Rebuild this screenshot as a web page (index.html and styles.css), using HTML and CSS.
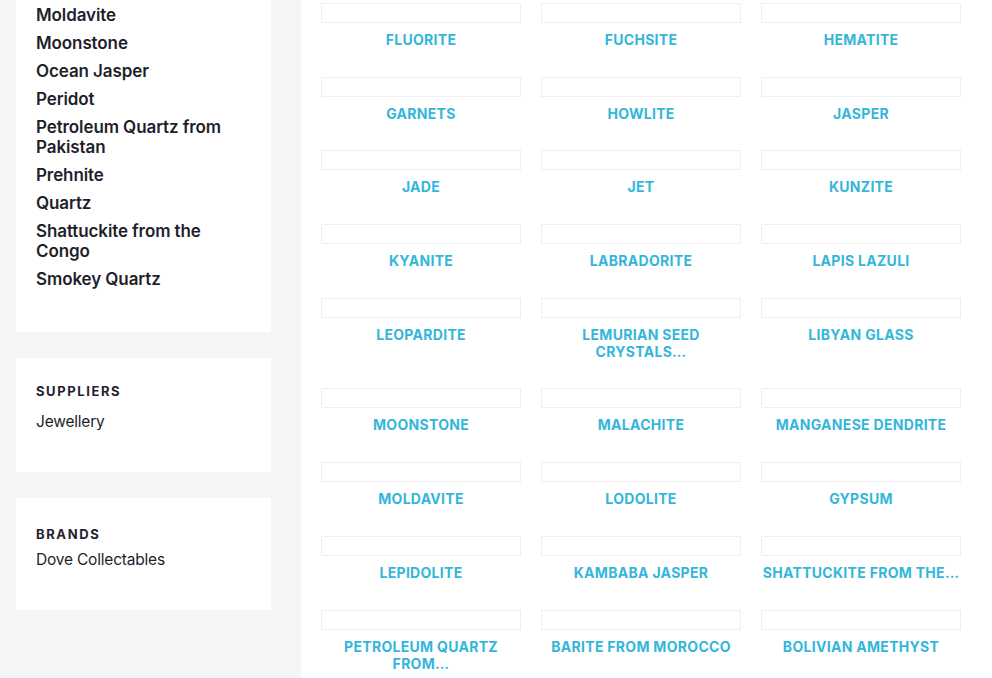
FILE: index.html
```html
<!DOCTYPE html>
<html lang="en">
<head>
<meta charset="utf-8">
<title>Crystals</title>
<link rel="stylesheet" href="styles.css">
</head>
<body>
<div class="page">
  <aside class="sidebar">
    <section class="widget widget-cats">
      <ul class="cat-list">
        <li>Moldavite</li>
        <li>Moonstone</li>
        <li>Ocean Jasper</li>
        <li>Peridot</li>
        <li>Petroleum Quartz from Pakistan</li>
        <li>Prehnite</li>
        <li>Quartz</li>
        <li>Shattuckite from the Congo</li>
        <li>Smokey Quartz</li>
      </ul>
    </section>
    <section class="widget widget-suppliers">
      <h3 class="widget-title">Suppliers</h3>
      <p class="widget-item">Jewellery</p>
    </section>
    <section class="widget widget-brands">
      <h3 class="widget-title">Brands</h3>
      <p class="widget-item">Dove Collectables</p>
    </section>
  </aside>
  <main class="main">
    <div class="grid">
      <a class="card"><span class="thumb"></span><span class="label">Fluorite</span></a>
      <a class="card"><span class="thumb"></span><span class="label">Fuchsite</span></a>
      <a class="card"><span class="thumb"></span><span class="label">Hematite</span></a>
      <a class="card"><span class="thumb"></span><span class="label">Garnets</span></a>
      <a class="card"><span class="thumb"></span><span class="label">Howlite</span></a>
      <a class="card"><span class="thumb"></span><span class="label">Jasper</span></a>
      <a class="card"><span class="thumb"></span><span class="label">Jade</span></a>
      <a class="card"><span class="thumb"></span><span class="label">Jet</span></a>
      <a class="card"><span class="thumb"></span><span class="label">Kunzite</span></a>
      <a class="card"><span class="thumb"></span><span class="label">Kyanite</span></a>
      <a class="card"><span class="thumb"></span><span class="label">Labradorite</span></a>
      <a class="card"><span class="thumb"></span><span class="label">Lapis Lazuli</span></a>
      <a class="card"><span class="thumb"></span><span class="label">Leopardite</span></a>
      <a class="card"><span class="thumb"></span><span class="label">Lemurian Seed Crystals…</span></a>
      <a class="card"><span class="thumb"></span><span class="label">Libyan Glass</span></a>
      <a class="card"><span class="thumb"></span><span class="label">Moonstone</span></a>
      <a class="card"><span class="thumb"></span><span class="label">Malachite</span></a>
      <a class="card"><span class="thumb"></span><span class="label">Manganese Dendrite</span></a>
      <a class="card"><span class="thumb"></span><span class="label">Moldavite</span></a>
      <a class="card"><span class="thumb"></span><span class="label">Lodolite</span></a>
      <a class="card"><span class="thumb"></span><span class="label">Gypsum</span></a>
      <a class="card"><span class="thumb"></span><span class="label">Lepidolite</span></a>
      <a class="card"><span class="thumb"></span><span class="label">Kambaba Jasper</span></a>
      <a class="card"><span class="thumb"></span><span class="label nowrap">Shattuckite from the…</span></a>
      <a class="card"><span class="thumb"></span><span class="label">Petroleum Quartz from…</span></a>
      <a class="card"><span class="thumb"></span><span class="label nowrap">Barite from Morocco</span></a>
      <a class="card"><span class="thumb"></span><span class="label">Bolivian Amethyst</span></a>
    </div>
  </main>
</div>
</body>
</html>
```
FILE: styles.css
```css
html, body {
  margin: 0;
  padding: 0;
}
body {
  background: #f5f5f5;
  font-family: Inter, "Open Sans", sans-serif;
  color: #1e1e2a;
  height: 678px;
  overflow: hidden;
}
.page {
  display: flex;
  align-items: stretch;
  min-height: 678px;
}
.sidebar {
  width: 255px;
  flex: 0 0 255px;
  padding: 0 30px 0 16px;
  display: flex;
  flex-direction: column;
  gap: 26px;
}
.widget {
  background: #fff;
  padding: 0 20px 40px;
}
.widget-cats {
  padding-top: 5px;
  padding-bottom: 43px;
}
.cat-list {
  list-style: none;
  margin: 0;
  padding: 0;
  display: flex;
  flex-direction: column;
  gap: 8px;
}
.cat-list li {
  font-size: 17px;
  line-height: 20px;
  font-weight: 600;
  color: #1f1f2c;
  letter-spacing: -0.1px;
}
.widget-title {
  margin: 0;
  font-size: 13px;
  line-height: 16px;
  font-weight: 700;
  letter-spacing: 1.6px;
  text-transform: uppercase;
  color: #23232f;
}
.widget-item {
  margin: 0;
  font-size: 15.5px;
  line-height: 20px;
  font-weight: 400;
  color: #1e1e2a;
  letter-spacing: -0.2px;
}
.widget-suppliers {
  padding-top: 25px;
}
.widget-suppliers .widget-title {
  margin-bottom: 13px;
}
.widget-brands {
  padding-top: 28px;
}
.widget-brands .widget-title {
  margin-bottom: 8px;
}
.main {
  flex: 1;
  background: #fff;
  padding: 3px 20px 0;
}
.grid {
  display: grid;
  grid-template-columns: repeat(3, 200px);
  column-gap: 20px;
  row-gap: 28.7px;
  align-items: start;
}
.card {
  display: flex;
  flex-direction: column;
  align-items: center;
  text-decoration: none;
}
.thumb {
  display: block;
  width: 200px;
  height: 20px;
  box-sizing: border-box;
  border: 1px solid #efefef;
}
.label {
  margin-top: 8px;
  font-size: 14px;
  line-height: 17px;
  font-weight: 700;
  letter-spacing: 0.3px;
  text-transform: uppercase;
  text-align: center;
  color: #34b6da;
  padding: 0 8px;
}
.nowrap {
  white-space: nowrap;
  padding: 0;
}
```
